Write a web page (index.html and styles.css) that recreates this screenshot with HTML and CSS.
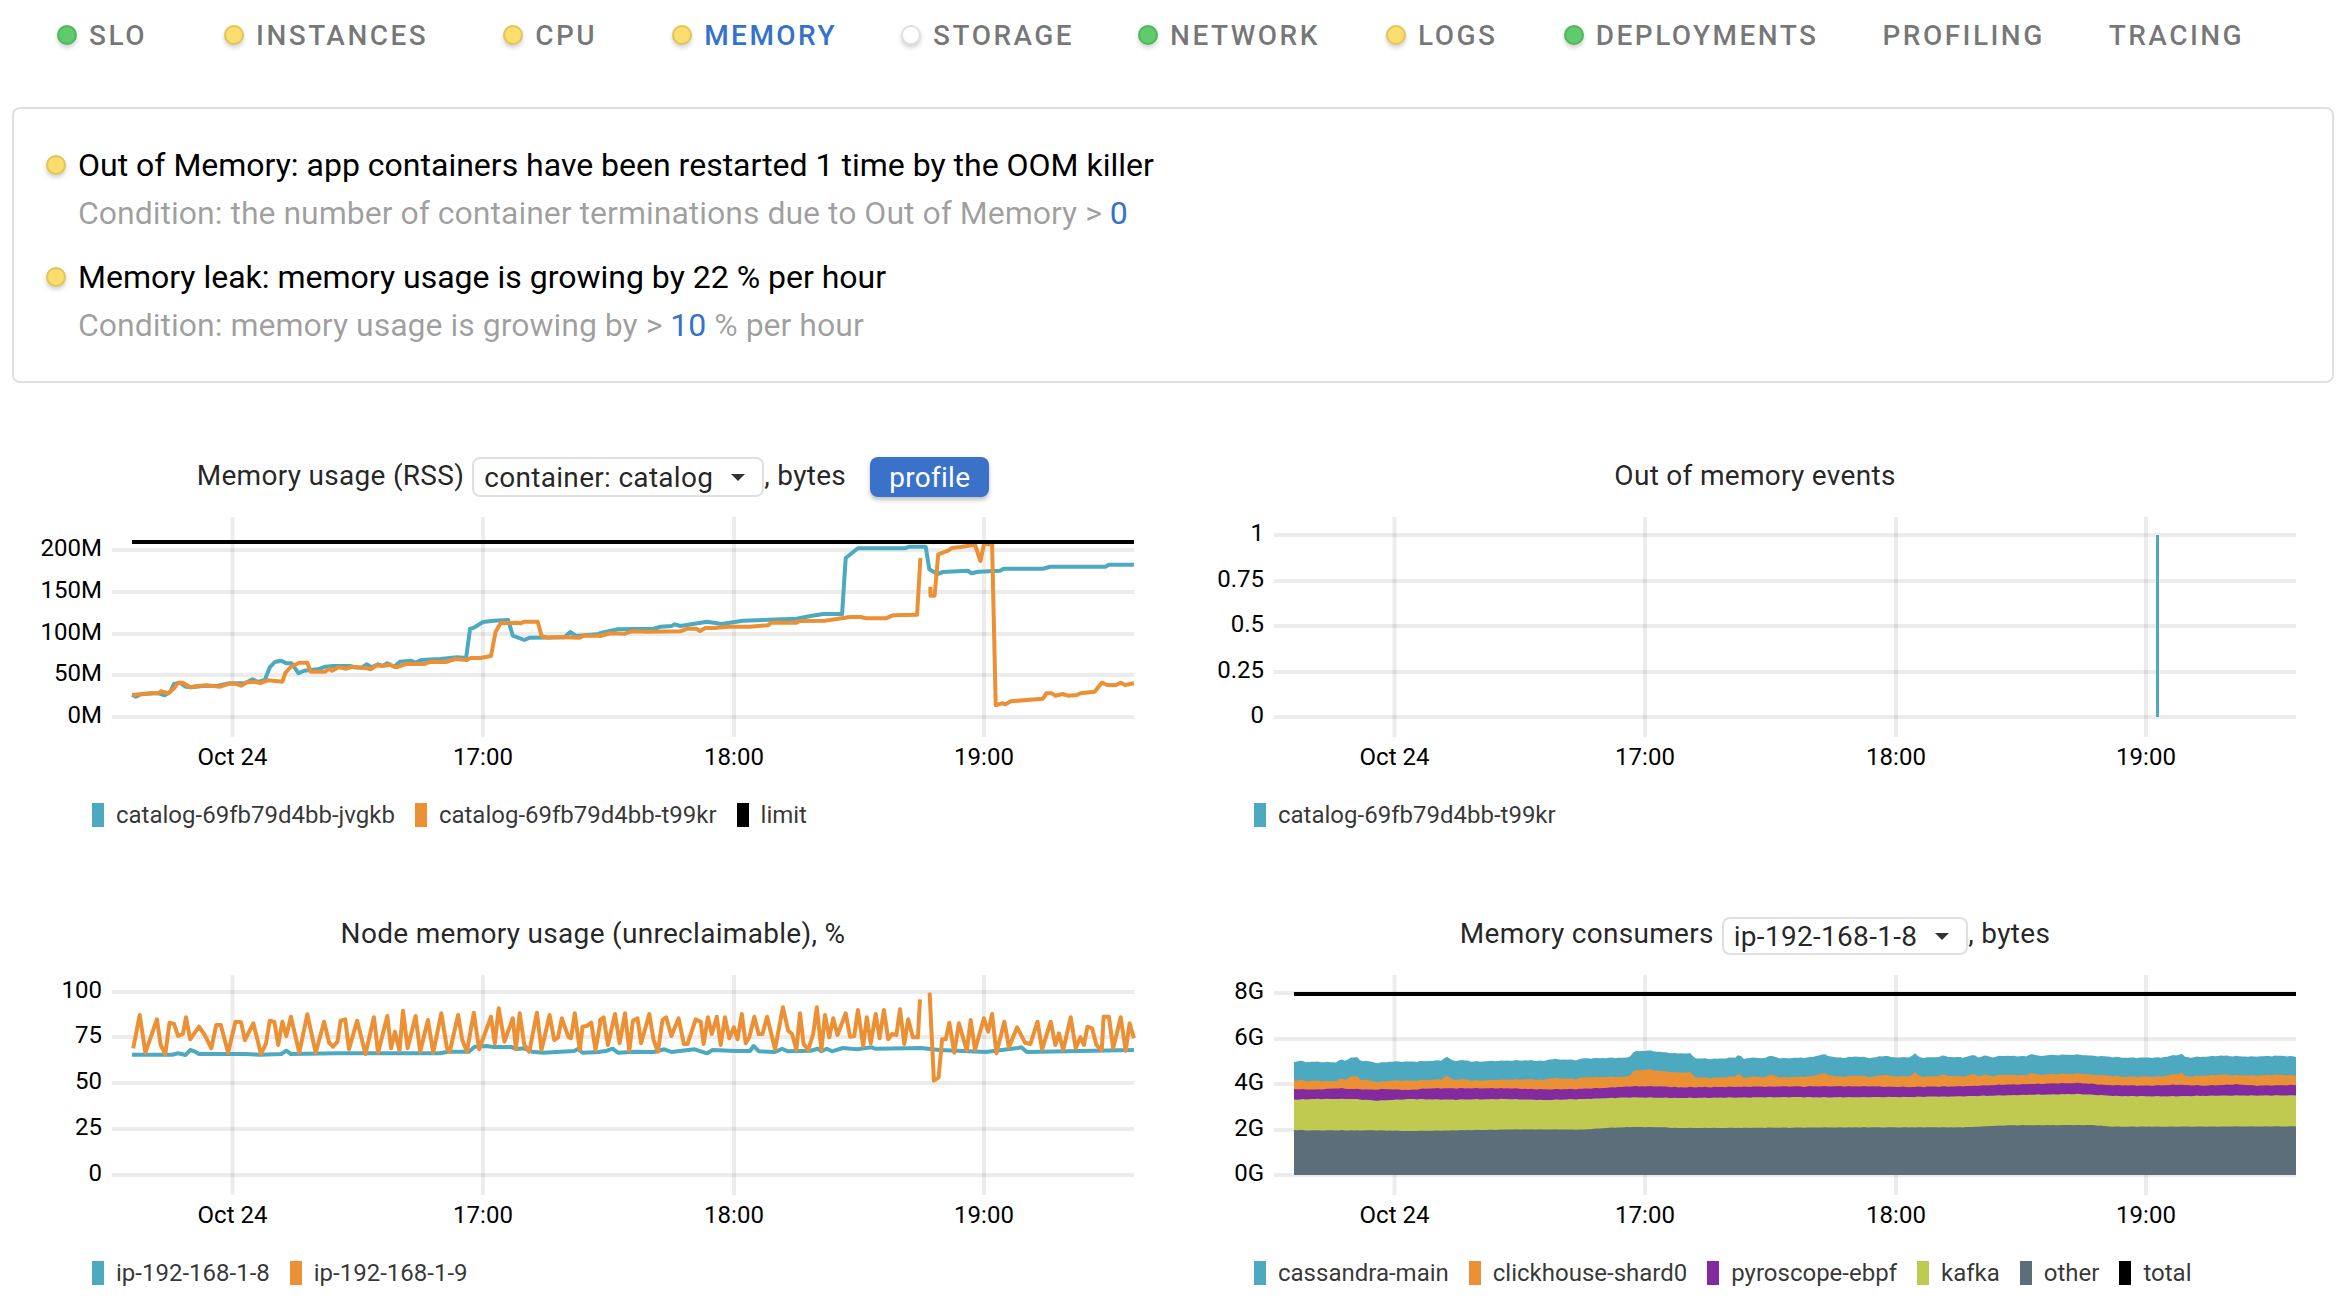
FILE: index.html
```html
<!DOCTYPE html>
<html lang="en">
  <head>
    <meta charset="UTF-8" />
    <title>Memory</title>
    <link rel="stylesheet" href="styles.css">
  </head>
  <body>
    <nav class="tabs">
      <a class="tab"><i class="dot ok"></i>SLO</a>
      <a class="tab"><i class="dot warn"></i>Instances</a>
      <a class="tab"><i class="dot warn"></i>CPU</a>
      <a class="tab active"><i class="dot warn"></i>Memory</a>
      <a class="tab"><i class="dot unknown"></i>Storage</a>
      <a class="tab"><i class="dot ok"></i>Network</a>
      <a class="tab"><i class="dot warn"></i>Logs</a>
      <a class="tab"><i class="dot ok"></i>Deployments</a>
      <a class="tab">Profiling</a>
      <a class="tab">Tracing</a>
    </nav>

    <!-- Checks -->
    <section class="checks">
      <div class="check">
        <div class="check-title"><i class="dot warn"></i>Out of Memory: app containers have been restarted 1 time by the OOM killer</div>
        <div class="check-condition">Condition: the number of container terminations due to Out of Memory &gt; <a>0</a></div>
      </div>
      <div class="check">
        <div class="check-title"><i class="dot warn"></i>Memory leak: memory usage is growing by 22 % per hour</div>
        <div class="check-condition">Condition: memory usage is growing by &gt; <a>10</a> % per hour</div>
      </div>
    </section>

    <!-- Charts -->
    <main class="charts">
      <div class="chart">
        <div class="chart-title">
          <span>Memory usage (RSS)</span>
          <div class="select wide">container: catalog<i class="caret"></i></div>
          <span class="after-select">, bytes</span>
          <button class="profile">profile</button>
        </div>
        <svg class="plot" id="rss" width="1162" height="260"></svg>
        <div class="legend">
          <div class="legend-item"><i class="swatch teal"></i>catalog-69fb79d4bb-jvgkb</div>
          <div class="legend-item"><i class="swatch orange"></i>catalog-69fb79d4bb-t99kr</div>
          <div class="legend-item"><i class="swatch black"></i>limit</div>
        </div>
      </div>

      <div class="chart">
        <div class="chart-title"><span>Out of memory events</span></div>
        <svg class="plot" id="oom" width="1162" height="260"></svg>
        <div class="legend">
          <div class="legend-item"><i class="swatch teal"></i>catalog-69fb79d4bb-t99kr</div>
        </div>
      </div>

      <div class="chart">
        <div class="chart-title"><span>Node memory usage (unreclaimable), %</span></div>
        <svg class="plot" id="node" width="1162" height="260"></svg>
        <div class="legend">
          <div class="legend-item"><i class="swatch teal"></i>ip-192-168-1-8</div>
          <div class="legend-item"><i class="swatch orange"></i>ip-192-168-1-9</div>
        </div>
      </div>

      <div class="chart shifted">
        <div class="chart-title">
          <span>Memory consumers</span>
          <div class="select">ip-192-168-1-8<i class="caret"></i></div>
          <span class="after-select">, bytes</span>
        </div>
        <svg class="plot" id="consumers" width="1162" height="260"></svg>
        <div class="legend">
          <div class="legend-item"><i class="swatch teal"></i>cassandra-main</div>
          <div class="legend-item"><i class="swatch orange"></i>clickhouse-shard0</div>
          <div class="legend-item"><i class="swatch purple"></i>pyroscope-ebpf</div>
          <div class="legend-item"><i class="swatch lime"></i>kafka</div>
          <div class="legend-item"><i class="swatch slate"></i>other</div>
          <div class="legend-item"><i class="swatch black"></i>total</div>
        </div>
      </div>
    </main>

    <script src="charts.js"></script>
  </body>
</html>
```

FILE: styles.css
```css
/* General styles */
html,
body {
  margin: 0;
  padding: 0;
  background-color: #ffffff;
  font-family: Roboto, "Liberation Sans", sans-serif;
  color: rgba(0, 0, 0, 0.87);
}
body {
  padding: 0 12px;
}
i {
  display: inline-block;
  flex: none;
}

/* Status dots */
.dot {
  box-sizing: border-box;
  width: 20px;
  height: 20px;
  margin-right: 12px;
  border-radius: 50%;
  border: 2px solid;
  box-shadow: 0 3px 4px rgba(0, 0, 0, 0.18);
}
.dot.ok {
  background-color: #5fcb6c;
  border-color: #4fb65d;
}
.dot.warn {
  background-color: #fbde6e;
  border-color: #e3c45c;
}
.dot.unknown {
  background-color: #ffffff;
  border-color: #e0e0e0;
}

/* Tabs */
.tabs {
  display: flex;
  height: 70px;
}
.tab {
  display: flex;
  align-items: center;
  justify-content: center;
  box-sizing: border-box;
  min-width: 180px;
  padding: 0 32px;
  font-size: 28px;
  font-weight: 500;
  letter-spacing: 2.46px;
  text-transform: uppercase;
  color: rgba(0, 0, 0, 0.54);
}
.tab.active {
  color: #3572c9;
}

/* Checks */
.checks {
  display: flex;
  flex-direction: column;
  gap: 16px;
  margin: 37px 2px 0 0;
  padding: 32px 32px 32px 32px;
  border: 2px solid #e0e0e0;
  border-radius: 8px;
}
.check-title {
  display: flex;
  align-items: center;
  font-size: 32px;
  line-height: 48px;
  color: #000;
}
.check-condition {
  padding-left: 32px;
  font-size: 32px;
  line-height: 48px;
  color: rgba(0, 0, 0, 0.38);
}
.check-condition a {
  color: #3572c9;
}

/* Charts */
.charts {
  display: grid;
  grid-template-columns: 1162px 1162px;
  margin-top: 74px;
}
.chart {
  padding-bottom: 88px;
}
.chart.shifted .plot {
  margin-top: 1px;
}
.chart.shifted .select {
  height: 38px;
  margin-top: 6px;
}
.chart-title {
  display: flex;
  align-items: center;
  justify-content: center;
  height: 36px;
  margin-bottom: 24px;
  font-size: 28px;
  letter-spacing: 0.3px;
  color: rgba(0, 0, 0, 0.87);
}
.select {
  display: flex;
  align-items: center;
  box-sizing: border-box;
  height: 40px;
  margin: 4px 0 0 8px;
  padding: 0 10px;
  border: 2px solid #e0e0e0;
  border-radius: 8px;
  font-size: 28px;
}
.caret {
  width: 0;
  height: 0;
  margin-left: 18px;
  margin-right: 7px;
  border-left: 7px solid transparent;
  border-right: 7px solid transparent;
  border-top: 7px solid rgba(0, 0, 0, 0.8);
}
.profile {
  height: 40px;
  margin: 4px 0 0 24px;
  padding: 0 19px;
  font-family: inherit;
  font-size: 28px;
  letter-spacing: 0.3px;
  color: white;
  background-color: #3a72c9;
  border: none;
  border-radius: 8px;
  box-shadow: 0 3px 4px rgba(0, 0, 0, 0.25);
}
.plot {
  display: block;
}
.plot text {
  font-family: Roboto, "Liberation Sans", sans-serif;
  font-size: 24px;
  fill: #000;
}
.legend {
  display: flex;
  gap: 20px;
  height: 24px;
  margin: 26px 0 0 80px;
  font-size: 24px;
  line-height: 24px;
  color: rgba(0, 0, 0, 0.8);
}
.legend-item {
  display: flex;
  align-items: center;
}
.swatch {
  width: 12px;
  height: 24px;
  margin-right: 12px;
}
.teal {
  background-color: #4da9bf;
}
.orange {
  background-color: #eb9034;
}
.purple {
  background-color: #832aa0;
}
.lime {
  background-color: #c0ca50;
}
.slate {
  background-color: #5c6e7a;
}
.black {
  background-color: #000;
}
```

FILE: charts.js
```js
const COLORS = {
  teal: "#4da9bf",
  orange: "#eb9034",
  purple: "#832aa0",
  lime: "#c0ca50",
  slate: "#5c6e7a",
  black: "#000",
};
const GRID_LEFT = 100;
const GRID_RIGHT = 1122;
const DATA_LEFT = 120;
const X_TICKS = [
  ["Oct 24", 220.5],
  ["17:00", 471],
  ["18:00", 722],
  ["19:00", 972],
];

function el(svg, name, attrs, text) {
  const node = document.createElementNS("http://www.w3.org/2000/svg", name);
  for (const key in attrs) node.setAttribute(key, attrs[key]);
  if (text) node.textContent = text;
  svg.appendChild(node);
  return node;
}

// y ticks are [label, y], both axes are in plot pixels
function drawAxes(svg, yTicks) {
  for (const [label, y] of yTicks) {
    el(svg, "line", { x1: GRID_LEFT, x2: GRID_RIGHT, y1: y, y2: y, stroke: "rgba(0,0,0,0.075)", "stroke-width": 4 });
    el(svg, "text", { x: 90, y: y + 6, "text-anchor": "end" }, label);
  }
  for (const [label, x] of X_TICKS) {
    el(svg, "line", { x1: x, x2: x, y1: 0, y2: 220, stroke: "rgba(0,0,0,0.075)", "stroke-width": 4 });
    el(svg, "text", { x: x, y: 248, "text-anchor": "middle" }, label);
  }
}

// series were read off the screenshot: pairs of x, y with a scale and an offset per run
function run(pairs, ox, sx, oy) {
  const pts = [];
  for (let i = 0; i < pairs.length; i += 2) {
    pts.push([ox + pairs[i] / sx, oy + pairs[i + 1] / 3]);
  }
  return pts;
}

function drawLine(svg, pts, color, width) {
  el(svg, "polyline", {
    points: pts.map((p) => p[0].toFixed(1) + "," + p[1].toFixed(1)).join(" "),
    fill: "none",
    stroke: color,
    "stroke-width": width || 4,
    "stroke-linejoin": "round",
  });
}

// interpolate y for x on a traced edge
function edgeAt(pts, x) {
  for (let i = 1; i < pts.length; i++) {
    if (x <= pts[i][0]) {
      const a = pts[i - 1];
      const b = pts[i];
      return a[1] + ((b[1] - a[1]) * (x - a[0])) / (b[0] - a[0]);
    }
  }
  return pts[pts.length - 1][1];
}

function drawBand(svg, edge, color, bottom, lift, noise) {
  let d = "M" + DATA_LEFT + " " + bottom;
  for (let x = DATA_LEFT; x <= GRID_RIGHT; x += 3) {
    const jitter = noise * (Math.sin(x * 1.3) + Math.sin(x * 0.47 + 1)) * 0.5;
    d += " L" + x + " " + (edgeAt(edge, x) + lift + jitter).toFixed(1);
  }
  d += " L" + GRID_RIGHT + " " + bottom + " Z";
  el(svg, "path", { d: d, fill: color });
}

/* Memory usage (RSS): plot top is y 517 on the page, left edge x 12 */
function rssChart() {
  const svg = document.getElementById("rss");
  drawAxes(svg, [["200M", 33], ["150M", 75], ["100M", 117], ["50M", 158], ["0M", 200]]);
  const teal = run([345,795,355,800,370,792,400,790,415,790,430,796,445,785,455,762,470,758,485,770,500,772,530,768,570,767,600,760,640,760,660,748,675,756,692,750,705,712,718,696,735,692,748,700,762,700,780,730,795,722,830,718,850,710,870,708,915,708,925,712,945,713,958,703,970,712,988,703,1000,708,1012,700,1030,710,1045,695,1075,692,1085,698,1100,690,1150,687,1195,682,1218,684,1228,597,1240,592,1262,576,1290,572,1328,570,1340,617,1370,630,1385,623,1475,622,1490,606,1505,618,1568,612], -12, 2.613, -87)
    .concat(run([0,610,50,598,150,596,170,590,200,588,210,583,225,588,260,582,300,575,340,582,400,572,550,566,590,558,625,552,678,552,688,384,722,355,855,355,865,350,912,350,922,418,945,432,960,426,1030,422,1040,430,1060,425,1120,422,1130,416,1240,416,1260,410,1415,410,1425,404,1495,404], 588, 2.8, -87));
  const orangeA = run([345,795,400,790,415,790,420,784,440,790,455,775,465,758,478,758,497,772,515,768,540,766,575,770,600,761,615,761,630,767,645,757,665,755,680,759,700,751,738,755,745,730,760,710,782,698,803,698,812,725,850,725,860,716,868,722,885,712,905,716,920,710,960,715,968,718,985,706,1000,708,1020,704,1035,712,1060,702,1110,702,1125,695,1165,696,1190,687,1220,690,1230,684,1255,684,1283,678,1295,605,1308,580,1350,578,1360,580,1370,575,1405,575,1415,618,1430,623,1460,621,1515,623,1525,617,1568,617], -12, 2.613, -87)
    .concat(run([0,618,30,610,70,611,90,604,135,605,225,604,245,596,270,596,280,603,295,594,320,594,360,590,420,590,470,586,480,578,550,578,560,573,630,572,700,561,730,561,745,565,800,565,820,556,888,554,897,384], 588, 2.8, -87));
  const orangeB = run([925,470,925,497,937,497,947,373,975,362,985,354,1010,351,1050,344,1065,393,1075,343,1098,343,1108,826,1125,820,1135,823,1150,814,1240,806,1250,790,1265,790,1275,797,1295,792,1310,797,1335,795,1345,790,1385,785,1405,758,1420,765,1445,765,1458,758,1470,765,1495,760], 588, 2.8, -87);
  drawLine(svg, teal, COLORS.teal);
  drawLine(svg, orangeA, COLORS.orange);
  drawLine(svg, orangeB, COLORS.orange);
  drawLine(svg, [[DATA_LEFT, 25], [GRID_RIGHT, 25]], COLORS.black, 4);
}

/* Out of memory events */
function oomChart() {
  const svg = document.getElementById("oom");
  drawAxes(svg, [["1", 18], ["0.75", 64], ["0.5", 109], ["0.25", 155], ["0", 200]]);
  drawLine(svg, [[983.5, 18], [983.5, 200]], COLORS.teal, 3);
}

/* Node memory usage: plot top is y 975 on the page */
function nodeChart() {
  const svg = document.getElementById("node");
  drawAxes(svg, [["100", 17], ["75", 62], ["50", 108], ["25", 154], ["0", 200]]);
  const teal = run([345,464,450,464,465,460,485,465,497,450,510,455,520,462,640,462,680,464,735,462,748,452,760,462,880,460,1150,460,1170,455,1225,455,1240,440,1270,438,1290,441,1335,441,1350,447,1370,445,1390,455,1420,458,1500,453,1510,447,1522,458,1568,456], -12, 2.613, -75)
    .concat(run([0,275,20,272,35,266,50,278,100,275,150,276,180,268,200,276,265,268,300,280,315,270,380,273,420,273,430,258,445,274,490,276,510,266,525,274,590,272,610,266,620,274,635,266,650,274,680,264,720,268,745,264,760,262,770,266,900,264,950,270,1000,272,1080,276,1170,264,1180,262,1195,276,1495,270], 588, 2.8, -15));
  const orangeA = run([348,445,365,345,380,458,410,358,420,435,432,462,443,368,455,372,465,408,478,402,486,352,497,418,520,380,535,405,552,445,565,375,577,375,596,458,615,365,630,367,640,420,662,370,682,462,695,430,705,362,717,366,727,435,738,365,748,408,760,350,782,458,803,343,825,458,847,365,860,428,870,440,882,425,890,362,902,358,912,448,933,362,955,462,977,352,988,458,1012,348,1022,445,1032,395,1044,452,1053,332,1065,445,1086,348,1098,455,1118,360,1132,458,1153,340,1168,445,1175,455,1197,345,1208,420,1220,455,1238,338,1252,448,1283,350,1293,430,1303,325,1318,425,1340,355,1348,448,1358,340,1370,435,1383,455,1403,338,1415,450,1436,345,1448,420,1458,412,1468,355,1485,410,1492,415,1502,340,1515,450,1522,380,1533,378,1545,368,1556,450,1568,372], -12, 2.613, -75)
    .concat(run([0,180,10,172,22,255,42,162,55,250,70,160,82,272,92,182,105,175,115,250,138,162,150,240,162,275,175,180,185,172,200,228,220,175,235,252,245,252,268,178,282,185,290,252,302,172,313,222,327,170,338,255,350,172,362,235,375,202,385,238,397,162,408,250,418,232,432,170,444,222,455,222,468,170,490,268,512,142,527,212,538,222,550,270,560,160,570,252,583,270,597,222,607,142,620,270,630,165,642,232,653,175,665,225,688,160,700,230,712,228,722,150,737,258,747,172,758,250,772,162,783,235,795,150,807,238,818,222,830,225,840,148,852,252,863,178,876,232,890,232,896,118], 588, 2.8, -15));
  const orangeB = run([923,98,935,362,948,352,958,238,968,238,978,188,992,278,1005,190,1027,272,1038,180,1050,270,1075,175,1087,215,1098,162,1110,280,1132,185,1145,262,1168,202,1190,248,1205,252,1225,185,1238,268,1262,185,1275,255,1285,220,1297,270,1318,172,1332,265,1345,232,1355,255,1365,200,1378,205,1390,255,1405,270,1410,170,1425,170,1437,265,1458,172,1472,272,1483,190,1495,235], 588, 2.8, -15);
  drawLine(svg, teal, COLORS.teal);
  drawLine(svg, orangeA, COLORS.orange);
  drawLine(svg, orangeB, COLORS.orange);
}

/* Memory consumers: stacked, plot top is y 976 on the page, left edge x 1174 */
function consumersChart() {
  const svg = document.getElementById("consumers");
  drawAxes(svg, [["8G", 18], ["6G", 64], ["4G", 109], ["2G", 155], ["0G", 200]]);
  const ox1 = 26;
  const ox2 = 606;
  const top = run([243,490,260,485,275,489,295,488,355,490,365,482,380,485,395,475,410,475,420,485,445,487,460,492,500,488,560,488,630,484,645,473,660,485,700,484,710,488,770,486,800,485,860,484,900,486,915,480,960,482,985,483,1000,478,1120,476,1135,457,1170,455,1240,463,1280,463,1295,478,1340,480,1400,475,1410,464,1420,482,1435,475,1470,478,1495,470,1515,478,1568,476], ox1, 2.613, -76)
    .concat(run([0,296,80,296,120,286,150,295,180,296,210,292,250,297,290,290,310,295,360,295,372,282,385,296,430,295,450,290,470,294,510,295,535,287,550,296,568,288,585,296,610,290,680,292,695,284,710,291,750,288,825,287,860,290,920,294,950,296,1050,296,1110,285,1120,296,1220,290,1300,293,1385,290,1422,293], ox2, 2.76, -16));
  const purple = run([243,570,300,572,360,568,400,570,460,572,480,570,545,573,600,568,800,568,900,571,985,570,1050,567,1130,562,1200,562,1250,565,1568,562], ox1, 2.613, -76)
    .concat(run([0,384,100,382,250,382,350,384,500,382,620,377,770,373,830,372,900,378,1020,380,1100,377,1170,380,1260,376,1320,380,1422,378], ox2, 2.76, -16));
  const lime = run([243,602,300,600,400,600,460,605,550,600,650,602,800,600,900,603,1000,600,1130,595,1250,597,1568,594], ox1, 2.613, -76)
    .concat(run([0,413,100,415,340,414,500,412,700,407,820,405,930,411,1050,412,1200,410,1422,409], ox2, 2.76, -16));
  const slate = run([243,693,290,694,460,694,540,696,850,691,1000,692,1060,687,1130,684,1220,685,1240,687,1568,686], ox1, 2.613, -76)
    .concat(run([0,506,200,505,500,505,630,499,860,498,920,503,1100,503,1422,502], ox2, 2.76, -16));
  drawBand(svg, top, COLORS.teal, 200, 0, 0.5);
  drawBand(svg, top, COLORS.orange, 200, 19, 0.5);
  drawBand(svg, purple, COLORS.purple, 200, 0, 0.4);
  drawBand(svg, lime, COLORS.lime, 200, 0, 0.3);
  drawBand(svg, slate, COLORS.slate, 200, 0, 0.2);
  drawLine(svg, [[DATA_LEFT, 19], [GRID_RIGHT, 19]], COLORS.black, 4);
}

rssChart();
oomChart();
nodeChart();
consumersChart();
```
